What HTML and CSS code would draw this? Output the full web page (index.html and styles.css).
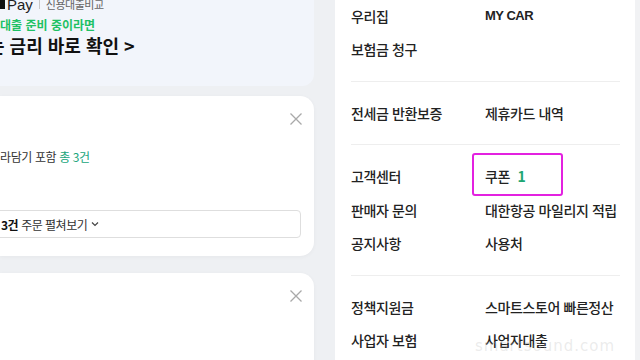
FILE: index.html
```html
<!DOCTYPE html>
<html lang="ko">
<head>
    <meta charset="UTF-8">
    <title>MY 메뉴</title>
    <link rel="stylesheet" href="styles.css">
</head>
<body>
    <div class="screen">
        <div class="left">
            <div class="banner">
                <div class="banner-brand">
                    <span class="brand-mark"></span>
                    <span class="brand-pay">Pay</span>
                    <span class="brand-bar"></span>
                    <span class="brand-sub">신용대출비교</span>
                </div>
                <p class="banner-lead">대출 준비 중이라면</p>
                <p class="banner-title">는 금리 바로 확인 &gt;</p>
            </div>

            <div class="card order-card">
                <button class="close-btn" aria-label="닫기">
                    <svg width="12" height="12" viewBox="0 0 12 12"><path d="M0.5 0.5 L11.5 11.5 M11.5 0.5 L0.5 11.5" stroke="#a9a9a9" stroke-width="1.3" fill="none"/></svg>
                </button>
                <p class="order-count">라담기 포함 <em>총 3건</em></p>
                <div class="order-toggle">
                    <b>3건</b> 주문 펼쳐보기
                    <svg width="8" height="6" viewBox="0 0 8 6"><path d="M1 1.5 L4 4.5 L7 1.5" stroke="#444" stroke-width="1.2" fill="none"/></svg>
                </div>
            </div>

            <div class="card next-card">
                <button class="close-btn" aria-label="닫기">
                    <svg width="12" height="12" viewBox="0 0 12 12"><path d="M0.5 0.5 L11.5 11.5 M11.5 0.5 L0.5 11.5" stroke="#a9a9a9" stroke-width="1.3" fill="none"/></svg>
                </button>
            </div>
        </div>

        <div class="menu-panel">
            <div class="menu-group first">
                <a class="menu-item">우리집</a>
                <a class="menu-item latin">MY CAR</a>
                <a class="menu-item">보험금 청구</a>
            </div>
            <div class="menu-group">
                <a class="menu-item">전세금 반환보증</a>
                <a class="menu-item">제휴카드 내역</a>
            </div>
            <div class="menu-group">
                <a class="menu-item">고객센터</a>
                <a class="menu-item marked">쿠폰 <em>1</em><span class="highlight"></span></a>
                <a class="menu-item">판매자 문의</a>
                <a class="menu-item">대한항공 마일리지 적립</a>
                <a class="menu-item">공지사항</a>
                <a class="menu-item">사용처</a>
            </div>
            <div class="menu-group">
                <a class="menu-item">정책지원금</a>
                <a class="menu-item">스마트스토어 빠른정산</a>
                <a class="menu-item">사업자 보험</a>
                <a class="menu-item">사업자대출</a>
            </div>
            <span class="watermark">smartsound.com</span>
        </div>

        <div class="edge"></div>
    </div>
</body>
</html>
```

FILE: styles.css
```css
body {
    margin: 0;
    font-family: "Noto Sans CJK KR", "Noto Sans", sans-serif;
    color: #222;
}
.screen {
    display: flex;
    width: 640px;
    height: 360px;
    overflow: hidden;
    background-color: #eef0f3;
}
p {
    margin: 0;
}

/* 왼쪽 카드 영역 */
.left {
    width: 314px;
    flex-shrink: 0;
    display: flex;
    flex-direction: column;
}
.left > div {
    flex-shrink: 0;
}
.banner {
    height: 86px;
    background-color: #f2f5fb;
    border-radius: 0 0 12px 0;
    box-sizing: border-box;
}
.banner-brand {
    display: flex;
    align-items: center;
    height: 10px;
    margin-top: -1px;
}
.brand-mark {
    width: 5px;
    height: 10px;
    background-color: #111;
}
.brand-pay {
    font-family: "Liberation Sans", Arial, sans-serif;
    font-size: 15px;
    color: #222;
    margin-left: 2px;
}
.brand-bar {
    width: 1px;
    height: 10px;
    background-color: #c8c8c8;
    margin: 0 6px;
}
.brand-sub {
    font-size: 11px;
    color: #666;
    letter-spacing: -0.5px;
}
.banner-lead {
    margin-top: 8px;
    font-size: 12px;
    font-weight: 700;
    line-height: 16px;
    color: #1ec164;
}
.banner-title {
    margin-top: 0;
    margin-left: -12px;
    font-size: 18px;
    font-weight: 700;
    line-height: 24px;
    color: #111;
}

.card {
    position: relative;
    background-color: #fff;
    border-radius: 0 14px 14px 0;
    box-shadow: 0 1px 4px rgba(0, 0, 0, 0.04);
}
.order-card {
    height: 160px;
    margin-top: 10px;
    padding-top: 53px;
    box-sizing: border-box;
}
.next-card {
    height: 120px;
    margin-top: 17px;
}
.close-btn {
    position: absolute;
    top: 17px;
    right: 12px;
    width: 12px;
    height: 12px;
    padding: 0;
    border: none;
    background: none;
    display: flex;
}
.order-count {
    font-size: 12px;
    line-height: 16px;
    color: #333;
    letter-spacing: -0.4px;
}
.order-count em {
    font-style: normal;
    color: #20a57b;
}
.order-toggle {
    display: flex;
    align-items: center;
    gap: 4px;
    height: 28px;
    margin: 45px 13px 0 -10px;
    padding-left: 10px;
    border: 1px solid #dedede;
    border-radius: 4px;
    font-size: 12px;
    color: #333;
    letter-spacing: -0.5px;
    box-sizing: border-box;
}
.order-toggle b {
    color: #111;
    margin-right: -1px;
}

/* 오른쪽 메뉴 */
.menu-panel {
    position: relative;
    width: 300px;
    margin-left: 21px;
    margin-top: -15.5px;
    padding: 0 15px 0 16px;
    background-color: #fff;
    box-sizing: border-box;
    flex-shrink: 0;
}
.menu-group {
    display: grid;
    grid-template-columns: 134px 1fr;
    grid-auto-rows: 33.5px;
    align-items: center;
    padding: 14.5px 0;
    border-top: 1px solid #eeeeee;
}
.menu-group.first {
    border-top: none;
}
.menu-item {
    position: relative;
    font-size: 14px;
    font-weight: 500;
    color: #222;
    letter-spacing: -0.4px;
    white-space: nowrap;
}
.menu-item.latin {
    font-family: "Liberation Sans", Arial, sans-serif;
    font-size: 13px;
    font-weight: 700;
    letter-spacing: -0.5px;
}
.menu-item em {
    font-style: normal;
    font-weight: 700;
    color: #1ea672;
    margin-left: 4px;
}
.highlight {
    position: absolute;
    left: -13px;
    top: -13px;
    width: 91px;
    height: 43px;
    border: 2px solid #e321e0;
    border-radius: 3px;
    box-sizing: border-box;
}
.watermark {
    position: absolute;
    left: 140px;
    bottom: 5px;
    font-family: "DejaVu Sans", sans-serif;
    font-size: 15px;
    color: rgba(190, 190, 190, 0.3);
    letter-spacing: 1px;
}

.edge {
    flex: 1;
    background-color: #f1f2f4;
}
```
